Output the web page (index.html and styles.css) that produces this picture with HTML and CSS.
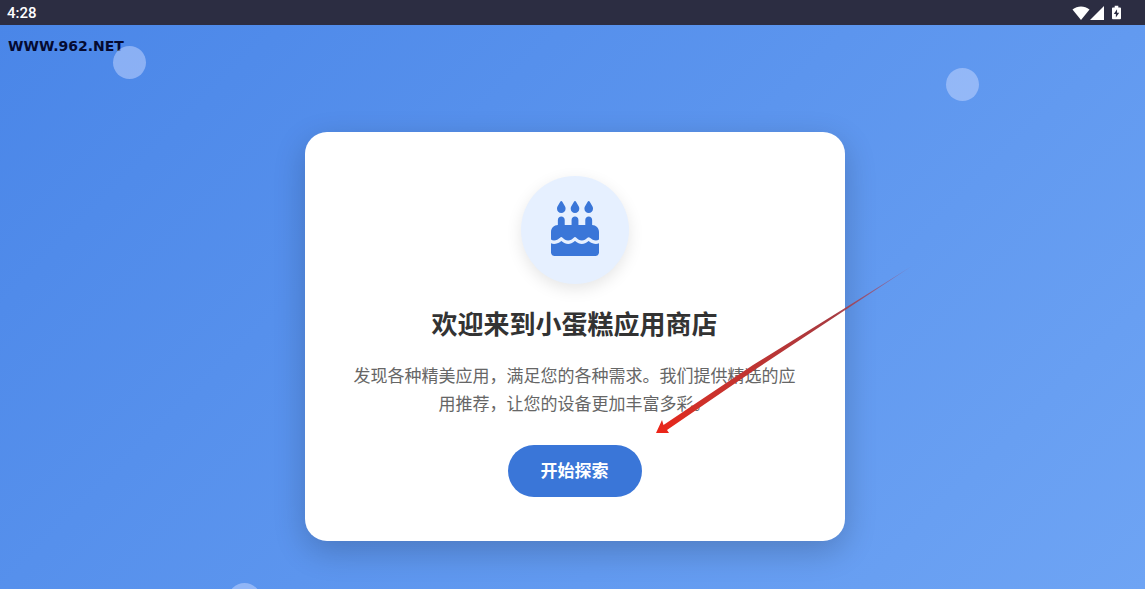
FILE: index.html
```html
<!DOCTYPE html>
<html lang="zh-CN">
<head>
  <meta charset="UTF-8">
  <meta name="viewport" content="width=device-width, initial-scale=1.0">
  <title>小蛋糕应用商店</title>
  <link rel="stylesheet" href="styles.css">
</head>
<body>
  <header class="status-bar">
    <span class="time">4:28</span>
    <div class="status-icons">
      <svg class="wifi" viewBox="0 0 18 14" aria-hidden="true"><path d="M0.5 3.6C5.500 -0.6 12.500 -0.6 17.500 3.600L9 14z"/></svg>
      <svg class="signal" viewBox="0 0 14 14" aria-hidden="true"><path d="M14 0v14H0z"/></svg>
      <svg class="battery" viewBox="0 0 10 15" aria-hidden="true">
        <path d="M3 0h4v2h2q1 0 1 1v11q0 1-1 1H1q-1 0-1-1V3q0-1 1-1h2z"/>
        <path class="bolt" d="M5.600 4L2 9.300h2.300V13L8 7.700H5.600z"/>
      </svg>
    </div>
  </header>

  <main class="hero">
    <span class="site-mark">WWW.962.NET</span>
    <span class="bubble bubble-left"></span>
    <span class="bubble bubble-right"></span>
    <span class="bubble bubble-bottom"></span>

    <section class="card">
      <div class="logo">
        <svg viewBox="0 0 448 512" aria-hidden="true">
          <path d="M86.400 5.500L61.800 47.600C58 54.100 56 61.600 56 69.200V72c0 22.100 17.900 40 40 40s40-17.900 40-40v-2.800c0-7.600-2-15-5.800-21.600L105.600 5.500C103.600 2.100 100 0 96 0s-7.600 2.100-9.600 5.500z"/>
          <path d="M214.400 5.500L189.800 47.600C186 54.100 184 61.600 184 69.200V72c0 22.100 17.900 40 40 40s40-17.900 40-40v-2.800c0-7.600-2-15-5.800-21.600L233.600 5.500C231.600 2.100 228 0 224 0s-7.600 2.100-9.600 5.500z"/>
          <path d="M342.400 5.500L317.800 47.600C314 54.100 312 61.600 312 69.200V72c0 22.100 17.900 40 40 40s40-17.900 40-40v-2.800c0-7.600-2-15-5.800-21.600L361.600 5.500C359.600 2.100 356 0 352 0s-7.600 2.100-9.600 5.500z"/>
          <path d="M128 176c0-17.700-14.300-32-32-32s-32 14.300-32 32v48c-35.300 0-64 28.700-64 64v71c8.300 5.200 18.100 9 28.800 9c20 0 40-13 55.500-26.500c7-7 16.500-7 23.500 0C121 354 140 368 160 368s39-14 52-26c7-8 17-8 24 0c13 12 32 26 52 26s39-14 52-26c7-7 16.500-7 23.500 0C379 355 399 368 419.200 368c10.700 0 20.500-3.800 28.800-9v-71c0-35.300-28.700-64-64-64v-48c0-17.700-14.300-32-32-32s-32 14.300-32 32v48h-64v-48c0-17.700-14.300-32-32-32s-32 14.300-32 32v48h-64z"/>
          <path d="M448 394.600c-8.500 3.300-18.200 5.400-28.800 5.400c-22.500 0-42.400-9.900-55.800-18.600c-4.100-2.700-7.800-5.400-11.400-8.200c-2.800 2.200-6.100 4.600-10.100 7.400C329.400 389.300 310.200 400 288 400s-41.400-10.700-53.900-19.400c-4-2.800-7.300-5.200-10.100-7.400c-2.800 2.200-6.100 4.600-10.100 7.400C201.400 389.300 182.200 400 160 400s-41.400-10.700-53.900-19.400c-4-2.800-7.300-5.200-10.100-7.400c-3.600 2.800-7.300 5.500-11.400 8.200C71.200 390.100 51.300 400 28.800 400c-10.600 0-20.300-2.100-28.800-5.400V480c0 17.700 14.300 32 32 32h384c17.700 0 32-14.300 32-32z"/>
        </svg>
      </div>
      <h1>欢迎来到小蛋糕应用商店</h1>
      <p>发现各种精美应用，满足您的各种需求。我们提供精选的应用推荐，让您的设备更加丰富多彩。</p>
      <button type="button" class="start">开始探索</button>

      <svg class="arrow" viewBox="0 0 258 172" aria-hidden="true">
        <defs>
          <linearGradient id="arrowFill" x1="0" y1="1" x2="1" y2="0">
            <stop offset="0" stop-color="#ee2417"/>
            <stop offset="0.15" stop-color="#d13028"/>
            <stop offset="0.7" stop-color="#a83a40"/>
            <stop offset="1" stop-color="#a04a70" stop-opacity="0.4"/>
          </linearGradient>
        </defs>
        <path fill="url(#arrowFill)" d="M1 168L7 155L8.500 160L98 100L190 43L257 1L191 44.500L101 104L12 165L14 168z"/>
      </svg>
    </section>
  </main>
</body>
</html>
```
FILE: styles.css
```css
* {
  box-sizing: border-box;
}

body {
  margin: 0;
  height: 100vh;
  display: flex;
  flex-direction: column;
  overflow: hidden;
  font-family: Roboto, "Noto Sans CJK SC", sans-serif;
  color: #333;
}

.status-bar {
  display: flex;
  justify-content: space-between;
  align-items: center;
  height: 25px;
  padding: 0 24px 0 7px;
  background-color: #2c2d42;
  color: #fff;
}

.time {
  font-size: 15px;
  font-weight: 500;
}

.status-icons {
  display: flex;
  align-items: center;
  fill: #fff;
}

.wifi {
  width: 18px;
  height: 14px;
}

.signal {
  width: 14px;
  height: 14px;
}

.battery {
  width: 9px;
  height: 15px;
  margin-left: 8px;
}

.bolt {
  fill: #2c2d42;
}

.hero {
  position: relative;
  flex: 1;
  padding: 107px 20px 48px 24px;
  overflow: hidden;
  background: linear-gradient(135deg, #4a86e8, #6ea4f4);
}

.site-mark {
  position: absolute;
  top: 13px;
  left: 8px;
  font-family: "DejaVu Sans", sans-serif;
  font-size: 14px;
  line-height: 16px;
  font-weight: bold;
  color: #050a30;
}

.bubble {
  position: absolute;
  width: 33px;
  height: 33px;
  border-radius: 50%;
  background-color: rgba(200, 215, 255, 0.5);
}

.bubble-left {
  top: 21px;
  left: 113px;
}

.bubble-right {
  top: 43px;
  right: 166px;
}

.bubble-bottom {
  bottom: -27px;
  left: 228px;
}

.card {
  position: relative;
  display: flex;
  flex-direction: column;
  align-items: center;
  max-width: 540px;
  margin: 0 auto;
  padding: 44px 43px;
  border-radius: 22px;
  background-color: #fff;
  text-align: center;
  box-shadow: 0 10px 32px rgba(0, 0, 0, 0.2);
}

.logo {
  display: flex;
  justify-content: center;
  align-items: center;
  width: 108px;
  height: 108px;
  padding-bottom: 3px;
  border-radius: 50%;
  background-color: #e6f0ff;
  box-shadow: 0 5px 16px rgba(0, 0, 0, 0.1);
}

.logo svg {
  width: 48px;
  height: 55px;
  fill: #3a76d8;
}

.card h1 {
  margin: 22px 0 18px;
  font-size: 26px;
  line-height: 38px;
  font-weight: bold;
}

.card p {
  margin: 0 0 27px;
  font-size: 17px;
  line-height: 28px;
  color: #666;
}

.start {
  padding: 13px 33px;
  border: none;
  border-radius: 26px;
  background-color: #3a76d8;
  color: #fff;
  font-family: inherit;
  font-size: 17px;
  line-height: 26px;
  font-weight: bold;
  cursor: pointer;
}

.start:hover {
  background-color: #2f66c2;
}

.arrow {
  position: absolute;
  top: 133px;
  left: 350px;
  width: 258px;
  height: 172px;
  pointer-events: none;
}
```
